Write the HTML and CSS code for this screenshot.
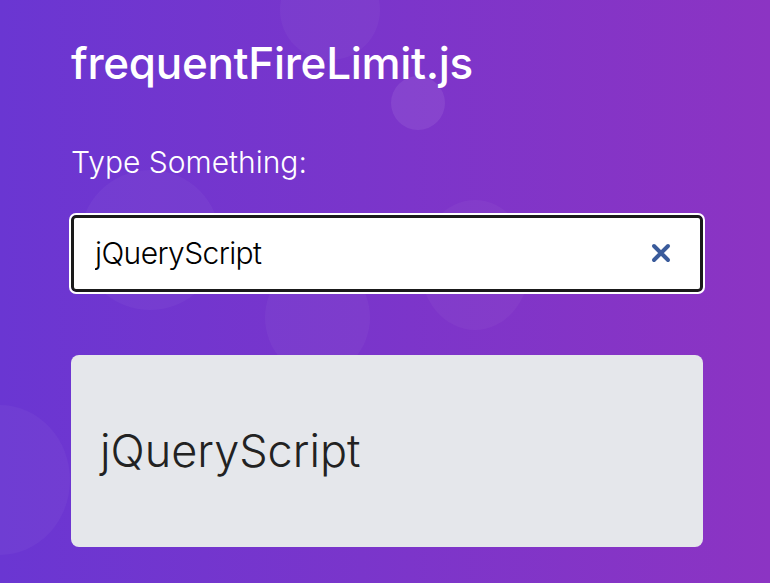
FILE: index.html
```html
<!DOCTYPE html>
<html lang="en">
<head>
    <meta charset="UTF-8">
    <meta name="viewport" content="width=device-width, initial-scale=1.0">
    <title>frequentFireLimit.js</title>
    <link rel="stylesheet" href="styles.css">
</head>
<body>
    <div class="bubble b1"></div>
    <div class="bubble b2"></div>
    <div class="bubble b3"></div>
    <div class="bubble b4"></div>
    <div class="bubble b5"></div>
    <div class="bubble b6"></div>

    <main class="wrap">
        <h1 class="title">frequentFireLimit.js</h1>
        <label class="label" for="search">Type Something:</label>
        <div class="field">
            <input type="text" id="search" class="search" value="jQueryScript" autofocus>
            <button class="clear" type="button" aria-label="Clear">
                <svg width="20" height="20" viewBox="0 0 20 20">
                    <path d="M3 3 L17 17 M17 3 L3 17" stroke="#3a5b9b" stroke-width="4" stroke-linecap="round"/>
                </svg>
            </button>
        </div>
        <div class="output" id="output">jQueryScript</div>
    </main>
</body>
</html>
```

FILE: styles.css
```css
body {
    margin: 0;
    height: 583px;
    overflow: hidden;
    position: relative;
    font-family: Inter, "Noto Sans", Arial, sans-serif;
    background: linear-gradient(to right, #6a36d2, #8c34c3);
    color: #fff;
}
.bubble {
    position: absolute;
    border-radius: 50%;
    background: rgba(255, 255, 255, 0.035);
}
.b1 { left: 391px; top: 76px; width: 54px; height: 54px; background: rgba(255, 255, 255, 0.08); }
.b2 { left: 280px; top: -40px; width: 100px; height: 100px; }
.b3 { left: 80px; top: 170px; width: 140px; height: 140px; }
.b4 { left: 265px; top: 260px; width: 105px; height: 115px; }
.b5 { left: 420px; top: 200px; width: 110px; height: 130px; }
.b6 { left: -70px; top: 405px; width: 140px; height: 150px; }
.wrap {
    position: relative;
    width: 632px;
    margin-left: 71px;
    padding-top: 37px;
}
.title {
    margin: 0;
    font-size: 44px;
    font-weight: 500;
    line-height: 1.2;
    letter-spacing: -0.3px;
}
.label {
    display: block;
    margin-top: 54px;
    font-size: 30px;
    font-weight: 300;
    line-height: 1.2;
}
.field {
    position: relative;
    margin-top: 35px;
}
.search {
    display: block;
    width: 100%;
    height: 77px;
    box-sizing: border-box;
    padding: 0 60px 0 21px;
    font-family: Inter, "Noto Sans", Arial, sans-serif;
    font-size: 30px;
    font-weight: 300;
    letter-spacing: -0.6px;
    color: #000;
    background: #fff;
    border: 3px solid #1a1a1a;
    border-radius: 5px;
    outline: 2px solid #fff;
    outline-offset: 0;
    caret-color: #000;
}
.clear {
    position: absolute;
    top: 28px;
    right: 32px;
    padding: 0;
    border: none;
    background: none;
    width: 20px;
    height: 20px;
    cursor: pointer;
}
.clear svg {
    display: block;
}
.output {
    margin-top: 63px;
    height: 192px;
    box-sizing: border-box;
    padding: 0 29px;
    display: flex;
    align-items: center;
    background: #e5e7eb;
    border-radius: 8px;
    color: #222;
    font-size: 45px;
    font-weight: 300;
}
```
